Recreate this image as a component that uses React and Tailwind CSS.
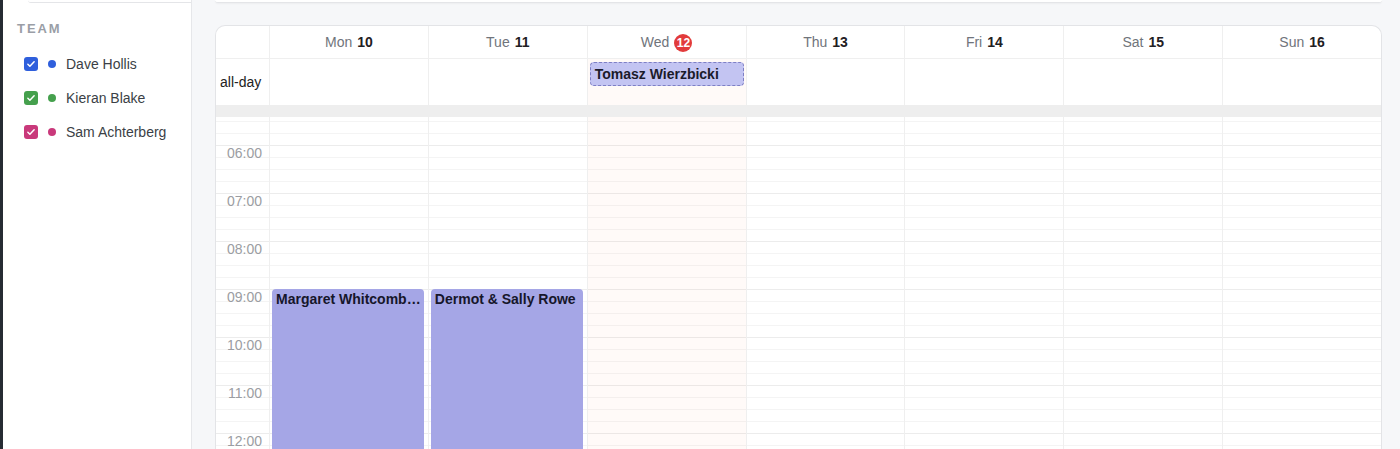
const TEAM = [
  { name: "Dave Hollis", color: "bg-[#2f5fdc]" },
  { name: "Kieran Blake", color: "bg-[#45a04d]" },
  { name: "Sam Achterberg", color: "bg-[#c9397b]" },
];

const DAYS = [
  { label: "Mon", num: "10" },
  { label: "Tue", num: "11" },
  { label: "Wed", num: "12", today: true },
  { label: "Thu", num: "13" },
  { label: "Fri", num: "14" },
  { label: "Sat", num: "15" },
  { label: "Sun", num: "16" },
];

// 15 minute slots starting at 05:30
const SLOTS = Array.from({ length: 28 }, (_, i) => {
  const mins = 5 * 60 + 30 + i * 15;
  const h = Math.floor(mins / 60);
  const m = mins % 60;
  return { hour: m === 0, label: `${String(h).padStart(2, "0")}:00` };
});

const EVENTS = {
  0: "Margaret Whitcombe-Harrington",
  1: "Dermot & Sally Rowe",
};

function Check() {
  return (
    <svg viewBox="0 0 16 16" className="w-[10px] h-[10px]" fill="none" stroke="white" strokeWidth={2.4}>
      <path d="M3 8.5l3.2 3L13 4.5" strokeLinecap="round" strokeLinejoin="round" />
    </svg>
  );
}

function Sidebar() {
  return (
    <aside className="w-[189px] shrink-0 bg-white border-r border-[#e6e7ea] flex flex-col">
      <div className="h-[3px] ml-[25px] border-b border-[#e4e5e8] rounded-bl-md" />
      <div className="pl-[14px] pt-[18px] text-[13px] font-bold tracking-[0.15em] text-[#9a9ea6] leading-4">
        TEAM
      </div>
      <div className="mt-[10px] flex flex-col">
        {TEAM.map((m) => (
          <div key={m.name} className="h-[34px] flex items-center pl-[21px]">
            <span className={`w-[14px] h-[14px] rounded-[3px] flex items-center justify-center ${m.color}`}>
              <Check />
            </span>
            <span className={`ml-[10px] w-[8px] h-[8px] rounded-full ${m.color}`} />
            <span className="ml-[10px] text-[14px] text-[#3b3f46]">{m.name}</span>
          </div>
        ))}
      </div>
    </aside>
  );
}

function Calendar() {
  return (
    <div className="mt-[22px] flex-1 min-h-0 bg-white border border-[#e3e4e7] border-b-0 rounded-t-[10px] flex flex-col overflow-hidden">
      <div className="grid grid-cols-[53px_repeat(7,minmax(0,1fr))] h-[33px] border-b border-[#efefef]">
        <div />
        {DAYS.map((d) => (
          <div key={d.label} className="border-l border-[#efefef] flex items-center justify-center text-[14px] gap-[5px] pt-[1px]">
            <span className="text-[#70747b]">{d.label}</span>
            {d.today ? (
              <span className="w-[18px] h-[18px] rounded-full bg-[#e23b3b] text-white text-[12px] font-bold flex items-center justify-center">
                {d.num}
              </span>
            ) : (
              <span className="font-bold text-[#1f2023]">{d.num}</span>
            )}
          </div>
        ))}
      </div>

      <div className="grid grid-cols-[53px_repeat(7,minmax(0,1fr))] h-[46px]">
        <div className="flex items-center pl-[4px] pt-[1px] text-[14px] text-[#222]">all-day</div>
        {DAYS.map((d) => (
          <div
            key={d.label}
            className={`border-l border-[#efefef] px-[2px] pt-[3px] ${d.today ? "bg-[#fffaf8]" : ""}`}
          >
            {d.today && (
              <div className="h-[24px] rounded-[4px] border border-dashed border-[#7e7fc4] bg-[#c3c4f2] px-[4px] flex items-center text-[14px] font-bold text-[#1b1b2a] truncate">
                Tomasz Wierzbicki
              </div>
            )}
          </div>
        ))}
      </div>

      <div className="h-[12px] bg-[#eeeeee]" />

      <div className="relative flex-1 overflow-hidden">
        <div className="h-[4px]" />
        {SLOTS.map((s, i) => (
          <div
            key={i}
            className={`grid grid-cols-[53px_repeat(7,minmax(0,1fr))] h-[12px] border-t ${s.hour ? "border-[#ececec]" : "border-[#f4f4f4]"}`}
          >
            <div>
              {s.hour && (
                <div className="text-right pr-[7px] text-[14px] leading-4 text-[#9b9da2] whitespace-nowrap -mt-[1px]">
                  {s.label}
                </div>
              )}
            </div>
          </div>
        ))}

        <div className="absolute inset-0 grid grid-cols-[53px_repeat(7,minmax(0,1fr))] pointer-events-none">
          <div />
          {DAYS.map((d, i) => (
            <div
              key={d.label}
              className={`relative border-l border-[#efefef] ${d.today ? "bg-[rgba(255,110,60,0.035)]" : ""}`}
            >
              {EVENTS[i] && (
                <div className="absolute top-[172px] left-[2px] right-[4px] h-[400px] rounded-t-[4px] bg-[#a5a6e6] pl-[4px] pr-[1px] pt-[2px] text-[14px] font-bold text-[#16162a] leading-4 truncate">
                  {EVENTS[i]}
                </div>
              )}
            </div>
          ))}
        </div>
      </div>
    </div>
  );
}

export default function App() {
  return (
    <div
      className="w-[1400px] h-[449px] flex overflow-hidden border-l-[3px] border-[#262b33] bg-[#f6f7f9]"
      style={{ fontFamily: '"Liberation Sans", Arial, sans-serif' }}
    >
      <Sidebar />
      <main className="flex-1 flex flex-col pl-[23px] pr-[18px] min-w-0">
        <div className="h-[3px] bg-white border-b border-[#e4e5e8] rounded-b-md shadow-[0_1px_2px_rgba(0,0,0,0.04)]" />
        <Calendar />
      </main>
    </div>
  );
}
